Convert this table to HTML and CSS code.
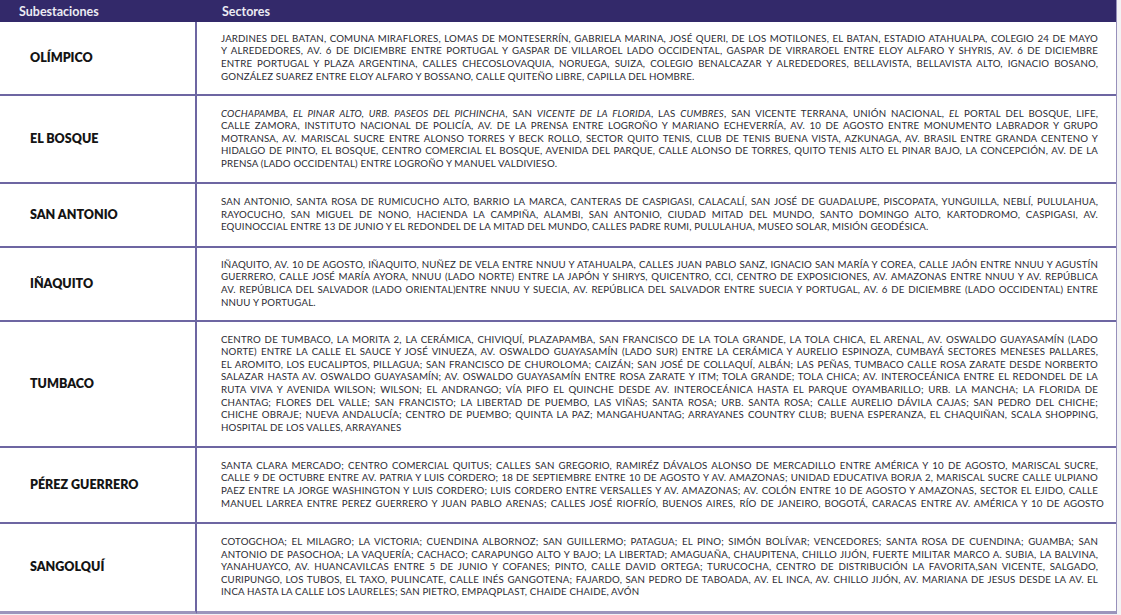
FILE: index.html
```html
<!DOCTYPE html>
<html lang="es">
<head>
<meta charset="utf-8">
<title>Subestaciones y Sectores</title>
<link rel="stylesheet" href="styles.css">
</head>
<body>
<div class="table">
  <div class="head head-name">Subestaciones</div>
  <div class="head head-sect">Sectores</div>

  <div class="name">OLÍMPICO</div>
  <div class="sect">
    <span class="ln">JARDINES DEL BATAN, COMUNA MIRAFLORES, LOMAS DE MONTESERRÍN, GABRIELA MARINA, JOSÉ QUERI, DE LOS MOTILONES, EL BATAN, ESTADIO ATAHUALPA, COLEGIO 24 DE MAYO</span>
    <span class="ln">Y ALREDEDORES, AV. 6 DE DICIEMBRE ENTRE PORTUGAL Y GASPAR DE VILLAROEL LADO OCCIDENTAL, GASPAR DE VIRRAROEL ENTRE ELOY ALFARO Y SHYRIS, AV. 6 DE DICIEMBRE</span>
    <span class="ln">ENTRE PORTUGAL Y PLAZA ARGENTINA, CALLES CHECOSLOVAQUIA, NORUEGA, SUIZA, COLEGIO BENALCAZAR Y ALREDEDORES, BELLAVISTA, BELLAVISTA ALTO, IGNACIO BOSANO,</span>
    <span class="ln last">GONZÁLEZ SUAREZ ENTRE ELOY ALFARO Y BOSSANO, CALLE QUITEÑO LIBRE, CAPILLA DEL HOMBRE.</span>
  </div>

  <div class="name">EL BOSQUE</div>
  <div class="sect">
    <span class="ln"><em>COCHAPAMBA, EL PINAR ALTO, URB. PASEOS DEL PICHINCHA</em>, SAN <em>VICENTE DE LA FLORIDA</em>, LAS <em>CUMBRES</em>, SAN VICENTE TERRANA, UNIÓN NACIONAL, <em>EL</em> PORTAL DEL BOSQUE, LIFE,</span>
    <span class="ln">CALLE ZAMORA, INSTITUTO NACIONAL DE POLICÍA, AV. DE LA PRENSA ENTRE LOGROÑO Y MARIANO ECHEVERRÍA, AV. 10 DE AGOSTO ENTRE MONUMENTO LABRADOR Y GRUPO</span>
    <span class="ln">MOTRANSA, AV. MARISCAL SUCRE ENTRE ALONSO TORRES Y BECK ROLLO, SECTOR QUITO TENIS, CLUB DE TENIS BUENA VISTA, AZKUNAGA, AV. BRASIL ENTRE GRANDA CENTENO Y</span>
    <span class="ln">HIDALGO DE PINTO, EL BOSQUE, CENTRO COMERCIAL EL BOSQUE, AVENIDA DEL PARQUE, CALLE ALONSO DE TORRES, QUITO TENIS ALTO EL PINAR BAJO, LA CONCEPCIÓN, AV. DE LA</span>
    <span class="ln last">PRENSA (LADO OCCIDENTAL) ENTRE LOGROÑO Y MANUEL VALDIVIESO.</span>
  </div>

  <div class="name">SAN ANTONIO</div>
  <div class="sect">
    <span class="ln">SAN ANTONIO, SANTA ROSA DE RUMICUCHO ALTO, BARRIO LA MARCA, CANTERAS DE CASPIGASI, CALACALÍ, SAN JOSÉ DE GUADALUPE, PISCOPATA, YUNGUILLA, NEBLÍ, PULULAHUA,</span>
    <span class="ln">RAYOCUCHO, SAN MIGUEL DE NONO, HACIENDA LA CAMPIÑA, ALAMBI, SAN ANTONIO, CIUDAD MITAD DEL MUNDO, SANTO DOMINGO ALTO, KARTODROMO, CASPIGASI, AV.</span>
    <span class="ln last">EQUINOCCIAL ENTRE 13 DE JUNIO Y EL REDONDEL DE LA MITAD DEL MUNDO, CALLES PADRE RUMI, PULULAHUA, MUSEO SOLAR, MISIÓN GEODÉSICA.</span>
  </div>

  <div class="name">IÑAQUITO</div>
  <div class="sect">
    <span class="ln">IÑAQUITO, AV. 10 DE AGOSTO, IÑAQUITO, NUÑEZ DE VELA ENTRE NNUU Y ATAHUALPA, CALLES JUAN PABLO SANZ, IGNACIO SAN MARÍA Y COREA, CALLE JAÓN ENTRE NNUU Y AGUSTÍN</span>
    <span class="ln">GUERRERO, CALLE JOSÉ MARÍA AYORA, NNUU (LADO NORTE) ENTRE LA JAPÓN Y SHIRYS, QUICENTRO, CCI, CENTRO DE EXPOSICIONES, AV. AMAZONAS ENTRE NNUU Y AV. REPÚBLICA</span>
    <span class="ln">AV. REPÚBLICA DEL SALVADOR (LADO ORIENTAL)ENTRE NNUU Y SUECIA, AV. REPÚBLICA DEL SALVADOR ENTRE SUECIA Y PORTUGAL, AV. 6 DE DICIEMBRE (LADO OCCIDENTAL) ENTRE</span>
    <span class="ln last">NNUU Y PORTUGAL.</span>
  </div>

  <div class="name">TUMBACO</div>
  <div class="sect">
    <span class="ln">CENTRO DE TUMBACO, LA MORITA 2, LA CERÁMICA, CHIVIQUÍ, PLAZAPAMBA, SAN FRANCISCO DE LA TOLA GRANDE, LA TOLA CHICA, EL ARENAL, AV. OSWALDO GUAYASAMÍN (LADO</span>
    <span class="ln">NORTE) ENTRE LA CALLE EL SAUCE Y JOSÉ VINUEZA, AV. OSWALDO GUAYASAMÍN (LADO SUR) ENTRE LA CERÁMICA Y AURELIO ESPINOZA, CUMBAYÁ SECTORES MENESES PALLARES,</span>
    <span class="ln">EL AROMITO, LOS EUCALIPTOS, PILLAGUA; SAN FRANCISCO DE CHUROLOMA; CAIZÁN; SAN JOSÉ DE COLLAQUÍ, ALBÁN; LAS PEÑAS, TUMBACO CALLE ROSA ZARATE DESDE NORBERTO</span>
    <span class="ln">SALAZAR HASTA AV. OSWALDO GUAYASAMÍN; AV. OSWALDO GUAYASAMÍN ENTRE ROSA ZARATE Y ITM; TOLA GRANDE; TOLA CHICA; AV. INTEROCEÁNICA ENTRE EL REDONDEL DE LA</span>
    <span class="ln">RUTA VIVA Y AVENIDA WILSON; WILSON; EL ANDRANGO; VÍA PIFO EL QUINCHE DESDE AV. INTEROCEÁNICA HASTA EL PARQUE OYAMBARILLO; URB. LA MANCHA; LA FLORIDA DE</span>
    <span class="ln">CHANTAG; FLORES DEL VALLE; SAN FRANCISTO; LA LIBERTAD DE PUEMBO, LAS VIÑAS; SANTA ROSA; URB. SANTA ROSA; CALLE AURELIO DÁVILA CAJAS; SAN PEDRO DEL CHICHE;</span>
    <span class="ln">CHICHE OBRAJE; NUEVA ANDALUCÍA; CENTRO DE PUEMBO; QUINTA LA PAZ; MANGAHUANTAG; ARRAYANES COUNTRY CLUB; BUENA ESPERANZA, EL CHAQUIÑAN, SCALA SHOPPING,</span>
    <span class="ln last">HOSPITAL DE LOS VALLES, ARRAYANES</span>
  </div>

  <div class="name">PÉREZ GUERRERO</div>
  <div class="sect">
    <span class="ln">SANTA CLARA MERCADO; CENTRO COMERCIAL QUITUS; CALLES SAN GREGORIO, RAMIRÉZ DÁVALOS ALONSO DE MERCADILLO ENTRE AMÉRICA Y 10 DE AGOSTO, MARISCAL SUCRE,</span>
    <span class="ln">CALLE 9 DE OCTUBRE ENTRE AV. PATRIA Y LUIS CORDERO; 18 DE SEPTIEMBRE ENTRE 10 DE AGOSTO Y AV. AMAZONAS; UNIDAD EDUCATIVA BORJA 2, MARISCAL SUCRE CALLE ULPIANO</span>
    <span class="ln">PAEZ ENTRE LA JORGE WASHINGTON Y LUIS CORDERO; LUIS CORDERO ENTRE VERSALLES Y AV. AMAZONAS; AV. COLÓN ENTRE 10 DE AGOSTO Y AMAZONAS, SECTOR EL EJIDO, CALLE</span>
    <span class="ln wide">MANUEL LARREA ENTRE PEREZ GUERRERO Y JUAN PABLO ARENAS; CALLES JOSÉ RIOFRÍO, BUENOS AIRES, RÍO DE JANEIRO, BOGOTÁ, CARACAS ENTRE AV. AMÉRICA Y 10 DE AGOSTO</span>
  </div>

  <div class="name">SANGOLQUÍ</div>
  <div class="sect">
    <span class="ln">COTOGCHOA; EL MILAGRO; LA VICTORIA; CUENDINA ALBORNOZ; SAN GUILLERMO; PATAGUA; EL PINO; SIMÓN BOLÍVAR; VENCEDORES; SANTA ROSA DE CUENDINA; GUAMBA; SAN</span>
    <span class="ln">ANTONIO DE PASOCHOA; LA VAQUERÍA; CACHACO; CARAPUNGO ALTO Y BAJO; LA LIBERTAD; AMAGUAÑA, CHAUPITENA, CHILLO JIJÓN, FUERTE MILITAR MARCO A. SUBIA, LA BALVINA,</span>
    <span class="ln">YANAHUAYCO, AV. HUANCAVILCAS ENTRE 5 DE JUNIO Y COFANES; PINTO, CALLE DAVID ORTEGA; TURUCOCHA, CENTRO DE DISTRIBUCIÓN LA FAVORITA,SAN VICENTE, SALGADO,</span>
    <span class="ln">CURIPUNGO, LOS TUBOS, EL TAXO, PULINCATE, CALLE INÉS GANGOTENA; FAJARDO, SAN PEDRO DE TABOADA, AV. EL INCA, AV. CHILLO JIJÓN, AV. MARIANA DE JESUS DESDE LA AV. EL</span>
    <span class="ln last">INCA HASTA LA CALLE LOS LAURELES; SAN PIETRO, EMPAQPLAST, CHAIDE CHAIDE, AVÓN</span>
  </div>
</div>
</body>
</html>
```

FILE: styles.css
```css
* {
  box-sizing: border-box;
}

html, body {
  margin: 0;
  padding: 0;
}

body {
  background: #f3f3f5;
  width: 1121px;
  height: 615px;
  overflow: hidden;
  font-family: "Lato", "Open Sans", sans-serif;
}

.table {
  width: 1117px;
  display: grid;
  grid-template-columns: 197px 1fr;
  grid-template-rows: 22px 74px 88px 64px 74px 126px 76px 90px;
  background: #ffffff;
  border-right: 1px solid #9790bb;
}

.head {
  background: #33296a;
  color: #ecebf3;
  font-weight: 700;
  font-size: 12.5px;
  display: flex;
  align-items: center;
}

.head-name {
  padding-left: 19px;
}

.head-sect {
  padding-left: 25px;
}

.name {
  display: flex;
  align-items: center;
  padding-left: 30px;
  font-weight: 800;
  font-size: 12.5px;
  color: #141414;
  border-right: 2px solid #6d66a2;
  border-bottom: 2px solid #6d66a2;
  padding-bottom: 2px;
}

.sect {
  display: flex;
  flex-direction: column;
  justify-content: center;
  padding: 0 18px 2px 24px;
  border-bottom: 2px solid #6d66a2;
  font-size: 9.7px;
  letter-spacing: 0.15px;
  line-height: 12.6px;
  color: #2b2b33;
}

.name:nth-last-child(2),
.sect:last-child {
  border-bottom: 3px solid #9c95bc;
}

.ln {
  display: block;
  text-align: justify;
  text-align-last: justify;
}

.ln.wide {
  margin-right: -6px;
}

.ln.last {
  text-align-last: left;
}

.ln em {
  font-style: italic;
}
```
